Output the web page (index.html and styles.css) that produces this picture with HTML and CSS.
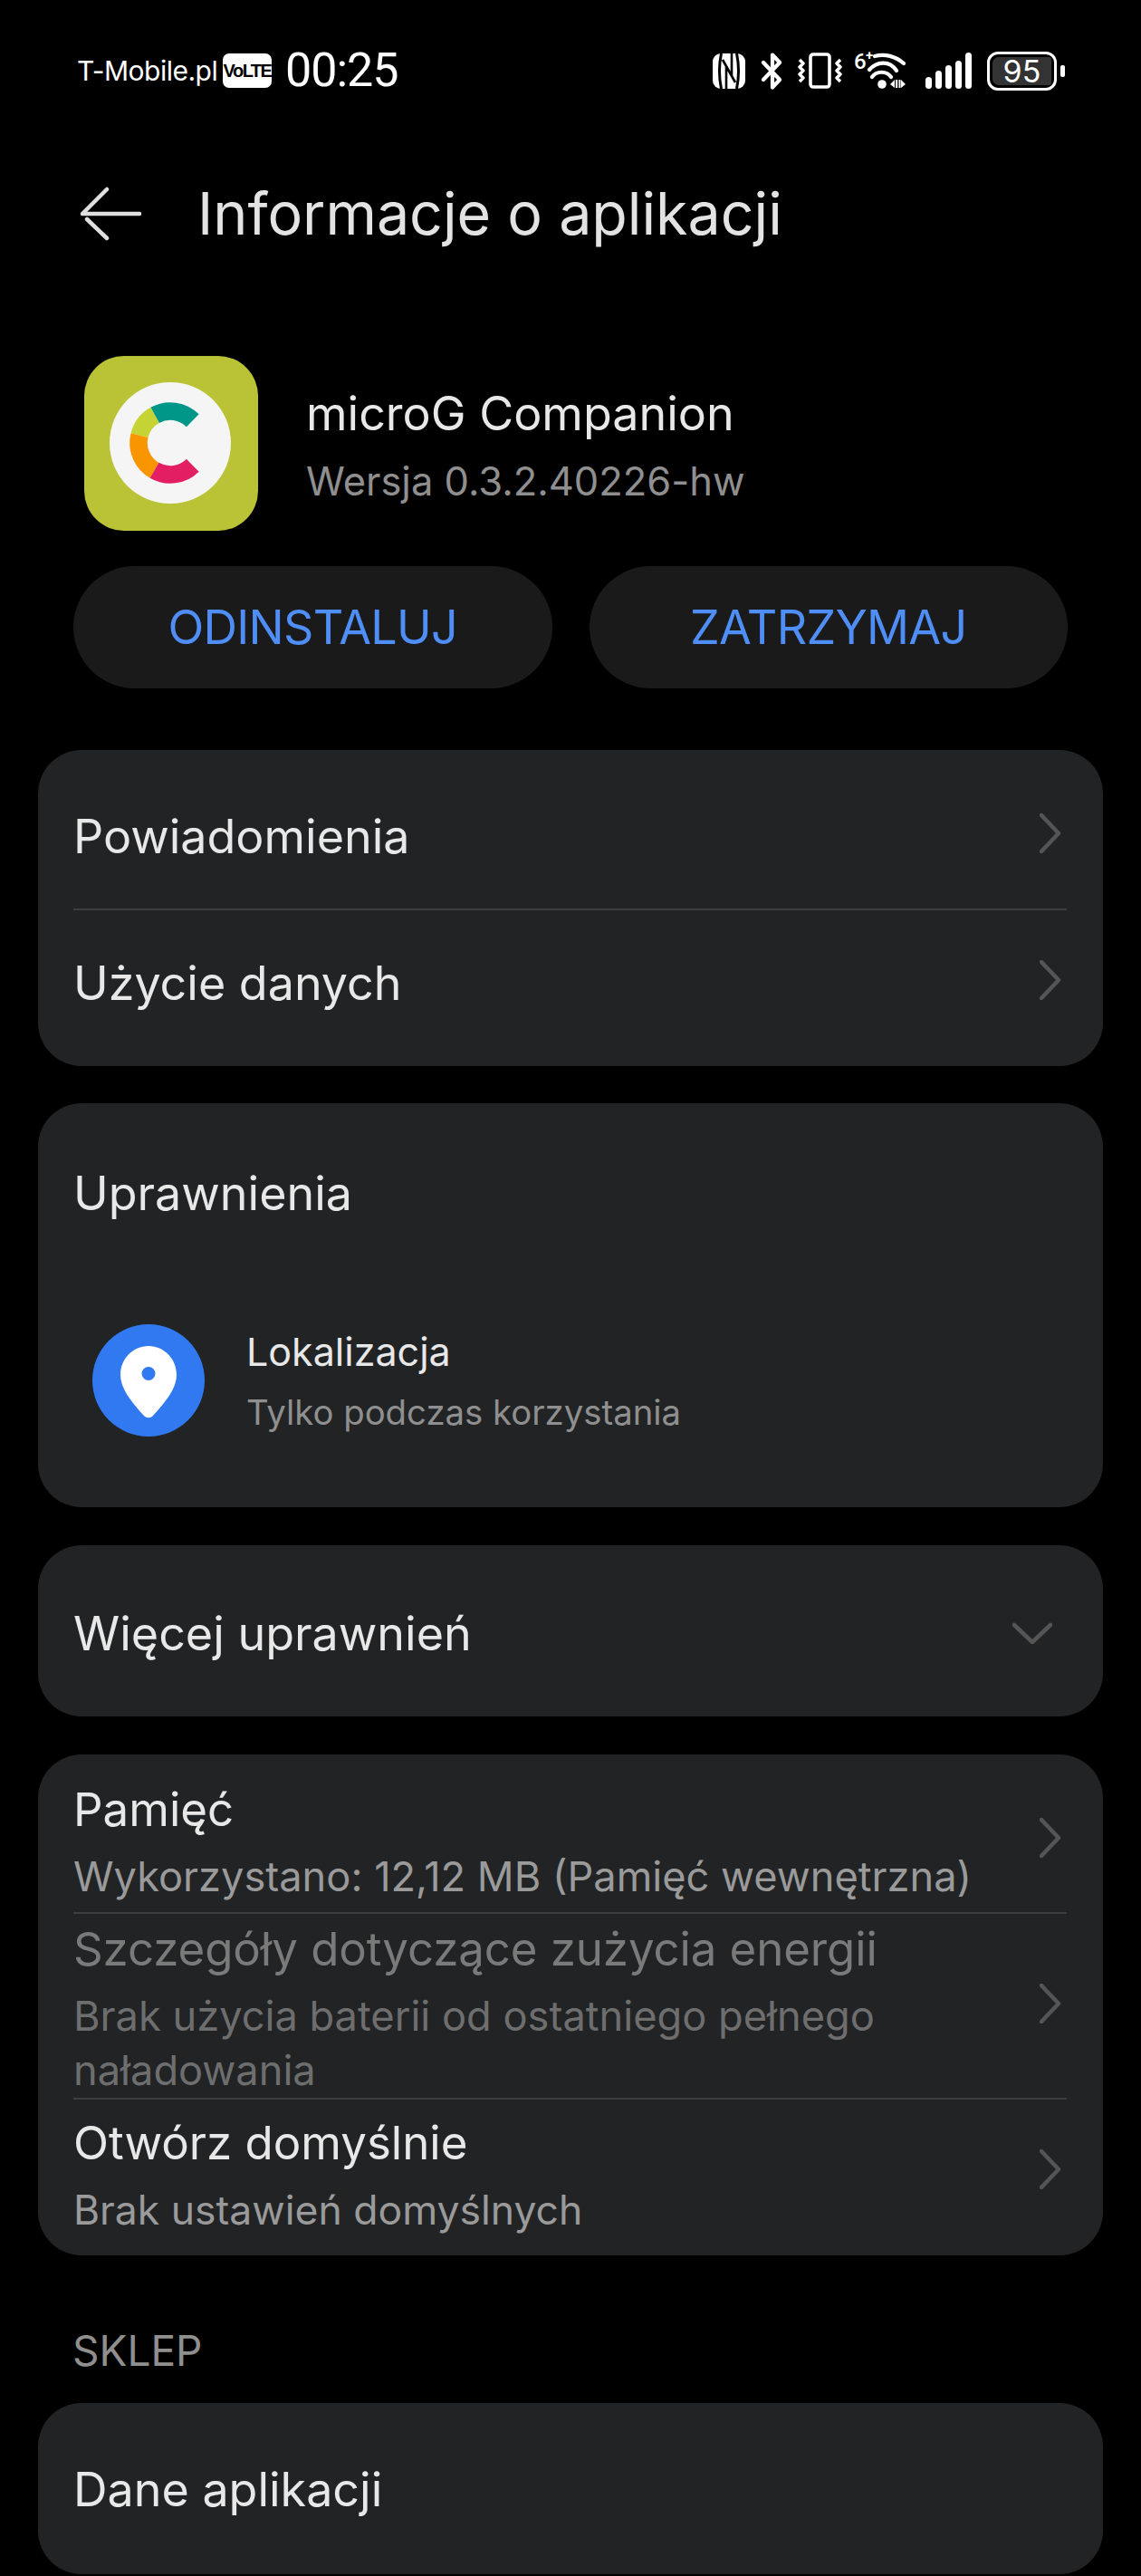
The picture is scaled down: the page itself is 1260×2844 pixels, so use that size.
FILE: index.html
```html
<!DOCTYPE html>
<html lang="pl">
<head>
<meta charset="utf-8">
<title>Informacje o aplikacji</title>
<link rel="stylesheet" href="styles.css">
</head>
<body>
<div class="status">
  <div class="status-left">
    <span class="carrier">T-Mobile.pl</span>
    <span class="volte">VoLTE</span>
    <span class="clock">00:25</span>
  </div>
  <div class="status-right">
    <svg class="ic-nfc" width="36" height="39" viewBox="0 0 36 39"><rect width="36" height="39" rx="9" fill="#fff"/><path fill="none" stroke="#000" stroke-width="3" d="M9.500 0C7 12 7 27 9.500 39M26.500 0C29 12 29 27 26.500 39"/><path fill="none" stroke="#000" stroke-width="2.600" d="M15 39V14L25 32M21 0V25L11 7"/></svg>
    <svg class="ic-bt" width="25" height="41" viewBox="0 0 25 41"><path fill="none" stroke="#fff" stroke-width="4.200" stroke-linecap="round" stroke-linejoin="round" d="M3 11l18 19-8 8.500V2.500l8 8.500L3 30"/></svg>
    <svg class="ic-vib" width="49" height="40" viewBox="0 0 49 40"><rect x="14" y="2" width="21" height="36" rx="3" fill="none" stroke="#fff" stroke-width="3.600"/><path fill="none" stroke="#fff" stroke-width="3.400" stroke-linejoin="round" d="M2 8l4 4-4 4 4 4-4 4 4 4-4 4M47 8l-4 4 4 4-4 4 4 4-4 4 4 4"/></svg>
    <span class="wifi">
      <svg class="ic-wifi" width="57" height="42" viewBox="0 0 57 42"><path fill="none" stroke="#fff" stroke-width="4.200" stroke-linecap="round" d="M23 5c11-3 23 0 32 8M17 20c8-9 22-11 30 1M20 28c5-7 16-7 21 0"/><circle cx="31" cy="36" r="4.800" fill="#fff"/><path fill="#fff" d="M40 36l5-5v9zM46 31h2.200v9H46zM49.500 31h2v9h-2zM52 31l5 5-5 4z"/></svg>
      <span class="wifi-six">6</span><span class="wifi-plus">+</span>
    </span>
    <svg class="ic-sig" width="51" height="40" viewBox="0 0 51 40"><g fill="#fff"><rect x="0" y="27" width="7" height="13" rx="3.500"/><rect x="11" y="20" width="7" height="20" rx="3.500"/><rect x="22" y="14" width="7" height="26" rx="3.500"/><rect x="33" y="9" width="7" height="31" rx="3.500"/><rect x="44" y="0" width="7" height="40" rx="3.500"/></g></svg>
    <span class="battery"><span class="battery-fill">95</span></span>
    <span class="battery-tip"></span>
  </div>
</div>

<header class="topbar">
  <svg class="back" width="68" height="60" viewBox="0 0 68 60"><path fill="none" stroke="#e0e0e0" stroke-width="4.500" stroke-linecap="round" stroke-linejoin="round" d="M66 30H3L30 3M8 36l22 21"/></svg>
  <h1 class="title">Informacje o aplikacji</h1>
</header>

<section class="app">
  <svg class="app-icon" width="192" height="193" viewBox="0 0 192 193">
    <rect width="192" height="193" rx="44" fill="#bac335"/>
    <circle cx="95" cy="96" r="67" fill="#f5f5f5"/>
    <g fill="none" stroke-width="19.500">
      <path stroke="#009688" d="M78.030 65.390A35 35 0 0 1 119.750 71.250"/>
      <path stroke="#c6d335" d="M61.040 87.530A35 35 0 0 1 78.030 65.390"/>
      <path stroke="#f89500" d="M77.500 126.310A35 35 0 0 1 61.040 87.530"/>
      <path stroke="#e31e63" d="M119.750 120.750A35 35 0 0 1 77.500 126.310"/>
    </g>
  </svg>
  <div class="app-meta">
    <div class="app-name">microG Companion</div>
    <div class="app-ver">Wersja 0.3.2.40226-hw</div>
  </div>
</section>

<div class="actions">
  <button class="pill">ODINSTALUJ</button>
  <button class="pill">ZATRZYMAJ</button>
</div>

<section class="card card-nav">
  <div class="row row-first">
    <span class="label">Powiadomienia</span>
    <svg class="chev" width="24" height="44" viewBox="0 0 24 44"><path d="M2 2l19 20L2 42"/></svg>
  </div>
  <div class="row row-last">
    <span class="label">Użycie danych</span>
    <svg class="chev" width="24" height="44" viewBox="0 0 24 44"><path d="M2 2l19 20L2 42"/></svg>
  </div>
</section>

<section class="card card-perm">
  <div class="perm-head label">Uprawnienia</div>
  <div class="perm">
    <svg class="perm-icon" width="124" height="124" viewBox="0 0 124 124"><circle cx="62" cy="62" r="62" fill="#3179f0"/><path fill="#fff" fill-rule="evenodd" d="M62 24c17 0 31 14 31 32 0 17-17 35-26 45-3 3-7 3-10 0-9-10-26-28-26-45 0-18 14-32 31-32zm0 23a7.500 7.500 0 1 0 0 15 7.500 7.500 0 0 0 0-15z"/></svg>
    <div class="perm-text">
      <div class="perm-name">Lokalizacja</div>
      <div class="perm-sub">Tylko podczas korzystania</div>
    </div>
  </div>
</section>

<section class="card card-more">
  <span class="label">Więcej uprawnień</span>
  <svg class="chev-down" width="44" height="24" viewBox="0 0 44 24"><path d="M2 3l20 19L42 3"/></svg>
</section>

<section class="card card-list">
  <div class="row row-a">
    <div class="txt"><div class="label">Pamięć</div><div class="sub">Wykorzystano: 12,12 MB (Pamięć wewnętrzna)</div></div>
    <svg class="chev" width="24" height="44" viewBox="0 0 24 44"><path d="M2 2l19 20L2 42"/></svg>
  </div>
  <div class="row row-b off">
    <div class="txt"><div class="label">Szczegóły dotyczące zużycia energii</div><div class="sub">Brak użycia baterii od ostatniego pełnego naładowania</div></div>
    <svg class="chev" width="24" height="44" viewBox="0 0 24 44"><path d="M2 2l19 20L2 42"/></svg>
  </div>
  <div class="row row-c">
    <div class="txt"><div class="label">Otwórz domyślnie</div><div class="sub">Brak ustawień domyślnych</div></div>
    <svg class="chev" width="24" height="44" viewBox="0 0 24 44"><path d="M2 2l19 20L2 42"/></svg>
  </div>
</section>

<div class="section-title">SKLEP</div>
<section class="card card-store">
  <span class="label">Dane aplikacji</span>
</section>
</body>
</html>
```
FILE: styles.css
```css
* { box-sizing: border-box; }
html, body { margin: 0; padding: 0; background: #000; }
body { width: 1260px; height: 2844px; overflow: hidden; color: #e8e8e8; font-family: Inter, Roboto, sans-serif; }

.status { height: 206px; padding: 56px 84px 0 85px; display: flex; justify-content: space-between; align-items: flex-start; }
.status-left { display: flex; align-items: center; height: 44px; }
.carrier { font-size: 30px; color: #fff; width: 161px; letter-spacing: -0.5px; }
.volte { background: #fff; color: #000; font: bold 20px "Liberation Sans", sans-serif; border-radius: 7px; width: 54px; height: 38px; display: flex; align-items: center; justify-content: center; letter-spacing: -1.5px; margin-right: 15px; }
.clock { font-family: Roboto, sans-serif; font-size: 52px; line-height: 44px; color: #fff; font-weight: 400; letter-spacing: -1px; }
.status-right { display: flex; align-items: center; height: 44px; }
.ic-nfc { margin-right: 17px; }
.ic-bt { margin-right: 16px; }
.ic-vib { margin-right: 13px; }
.wifi { position: relative; display: flex; margin-right: 22px; }
.wifi-six { position: absolute; left: 0; top: -3px; font: 500 24px/28px Roboto, sans-serif; color: #fff; }
.wifi-plus { position: absolute; left: 13px; top: -6px; font: 700 15px/20px Roboto, sans-serif; color: #fff; }
.ic-sig { margin-right: 17px; }
.battery { width: 77px; height: 43px; border: 3px solid #fff; border-radius: 12px; padding: 3px; display: flex; margin-right: 4px; }
.battery-fill { flex: 1; background: #333; border-radius: 7px 2px 2px 7px; color: #fff; font-size: 34px; line-height: 31px; text-align: center; }
.battery-tip { width: 5px; height: 13px; background: #fff; border-radius: 2px; }

.topbar { display: flex; align-items: center; gap: 62px; padding-left: 88px; height: 60px; }
.title { font-size: 64.500px; font-weight: 400; margin: 0; color: #e3e3e3; }

.app { display: flex; align-items: center; gap: 53px; padding-left: 93px; margin-top: 127px; }
.app-meta { padding-top: 7px; }
.app-name { font-size: 52px; line-height: 64px; color: #e8e8e8; }
.app-ver { font-size: 43.500px; line-height: 60px; color: #8f8f8f; margin-top: 12px; }

.actions { display: flex; gap: 41px; padding: 0 81px; margin-top: 39px; }
.pill { flex: 1; height: 135px; border: 0; border-radius: 68px; background: #1a1a1a; color: #4f8ef7; font: 400 52px Inter, sans-serif; letter-spacing: -0.7px; padding: 0; }

.card { background: #212325; border-radius: 48px; margin: 0 42px; padding: 0 40px 0 39px; }
.label { font-size: 52px; line-height: 68px; color: #e8e8e8; }
.row { display: flex; align-items: center; justify-content: space-between; padding-right: 6px; }
.row + .row { border-top: 2px solid #3d3e40; }
.card-nav { margin-top: 68px; }
.row-first { height: 175px; padding-top: 13px; }
.row-last { height: 174px; padding-bottom: 14px; }
.row > .label { padding-top: 4px; }
.chev { fill: none; stroke: #555; stroke-width: 4.500; stroke-linecap: round; stroke-linejoin: round; flex: none; margin-bottom: 4px; }
.card-perm { margin-top: 41px; height: 446px; padding-top: 66px; }
.perm { display: flex; align-items: center; gap: 46px; padding-left: 21px; margin-top: 109px; }
.perm-text { padding-top: 4px; }
.perm-name { font-size: 43px; line-height: 54px; color: #e8e8e8; }
.perm-sub { font-size: 38.300px; line-height: 54px; color: #8f8f8f; margin-top: 13px; }
.card-more { margin-top: 42px; height: 189px; padding-top: 4px; display: flex; align-items: center; justify-content: space-between; }
.card-more .label { padding-top: 2px; }
.chev-down { fill: none; stroke: #555; stroke-width: 4.500; stroke-linecap: round; stroke-linejoin: round; margin-right: 16px; }
.card-list { margin-top: 42px; height: 553px; }
.card-list .label { font-size: 51px; }
.row-a { height: 174px; padding-top: 14px; }
.row-b { height: 205px; }
.row-c { height: 174px; padding-bottom: 14px; }
.txt { flex: 1; padding-top: 4px; }
.row-b .txt { padding-top: 5px; }
.row-b .label { letter-spacing: -0.1px; }
.row-b .chev { margin-bottom: 6px; }
.row-c .txt { padding-top: 7px; }
.row-c .sub { font-size: 44.500px; }
.sub { font-size: 45.200px; color: #9a9a9a; line-height: 60px; margin-top: 10px; }
.off .label { color: #7a7a7a; }
.off .sub { color: #6e6e6e; }
.section-title { font-size: 46px; line-height: 52px; color: #8f8f8f; padding-left: 80px; margin-top: 79px; margin-bottom: 32px; }
.card-store { height: 189px; padding-top: 2px; display: flex; align-items: center; }
```
